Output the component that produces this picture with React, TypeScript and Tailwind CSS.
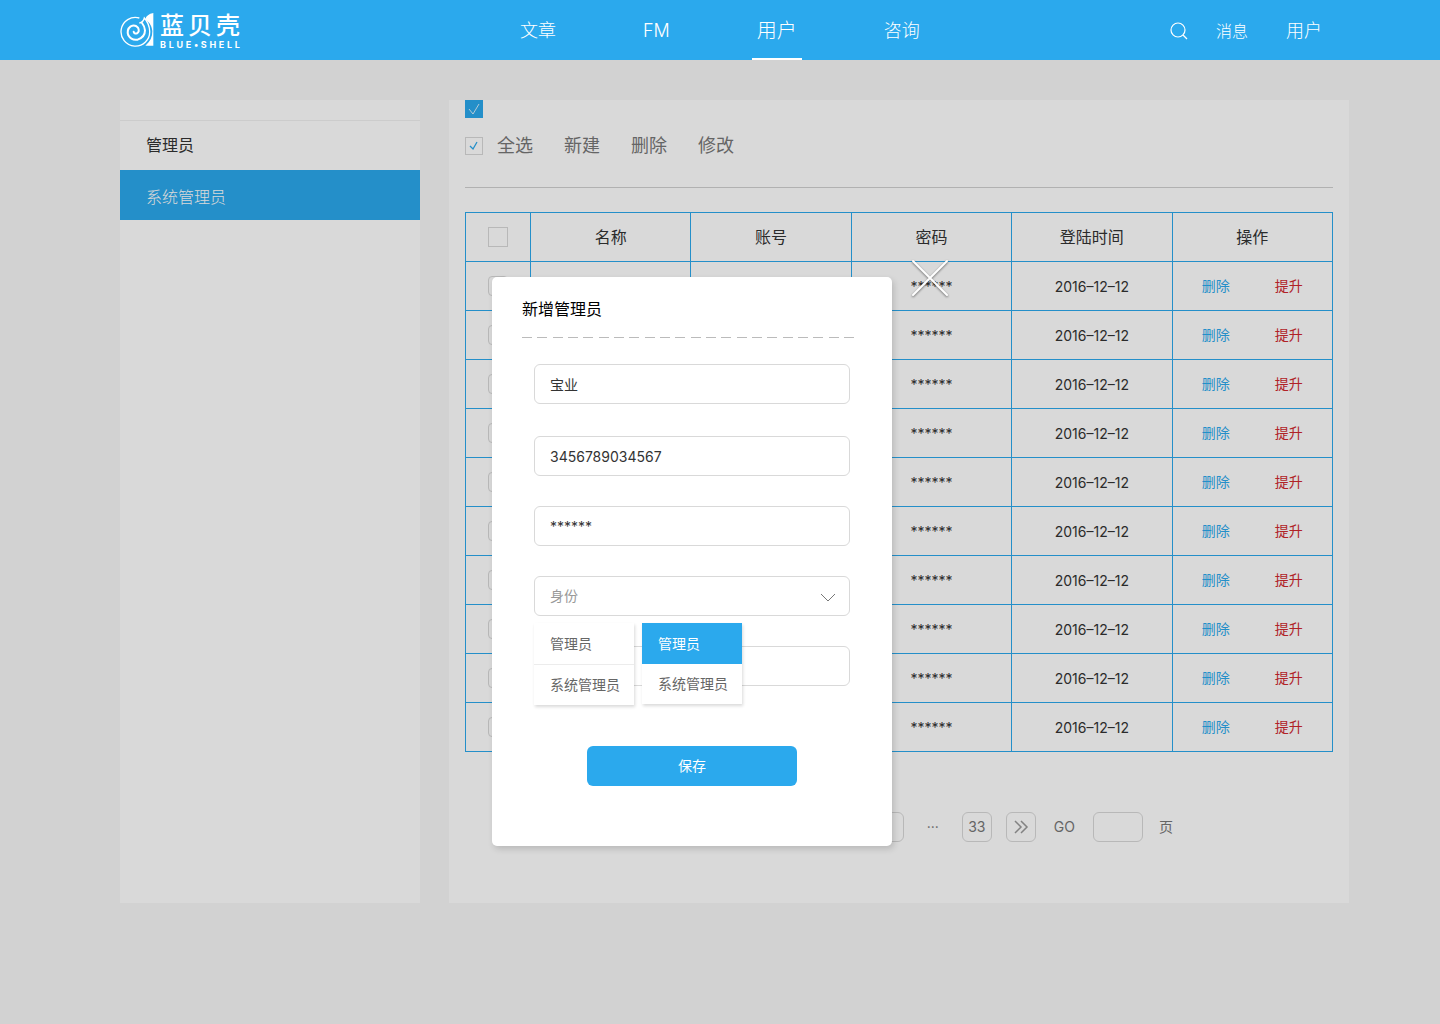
import type { ReactNode } from "react";

const navItems = [
  { label: "文章", active: false },
  { label: "FM", active: false },
  { label: "用户", active: true },
  { label: "咨询", active: false },
];

const rows = Array.from({ length: 10 }, (_, i) => ({ id: i, password: "******", date: "2016–12–12" }));

function Shell() {
  return (
    <svg viewBox="0 0 102 102" className="size-[34px] shrink-0" fill="none" aria-hidden="true">
      <path d="M76 18 Q80 4 100 0 V98 H76 Q98 80 97 54 Q95 36 84 26 Z" fill="#fff" />
      <path d="M58 15 A43 43 0 1 0 89 54 Q88 32 73 15 Q70 28 58 30" stroke="#fff" strokeWidth="4" />
      <path
        d="M41 56 Q43 64 51 61 Q60 55 54 44 Q45 34 32 40 Q19 50 25 67 Q34 83 53 80 Q75 73 75 52 Q74 40 66 30"
        stroke="#fff"
        strokeWidth="6"
        strokeLinecap="round"
      />
    </svg>
  );
}

function Logo() {
  return (
    <a href="#" aria-label="蓝贝壳 BLUE·SHELL" className="flex w-[120px] shrink-0 items-center gap-1.5 text-white">
      <Shell />
      <span className="flex flex-1 flex-col">
        <span className="flex justify-between text-2xl leading-7 font-medium">
          <span>蓝</span>
          <span>贝</span>
          <span>壳</span>
        </span>
        <span className="flex justify-between text-[9px] leading-[9px] font-bold">
          {["B", "L", "U", "E", "•", "S", "H", "E", "L", "L"].map((letter, i) => (
            <span key={i}>{letter}</span>
          ))}
        </span>
      </span>
    </a>
  );
}

function Header() {
  return (
    <header className="relative z-20 flex h-[60px] items-center bg-[#2ba9ed] pr-[118px] pl-[120px] font-light text-white">
      <Logo />
      <nav className="ml-[275px] flex h-full gap-[77px]">
        {navItems.map((item) => (
          <a
            key={item.label}
            href="#"
            className={
              item.active
                ? "flex items-center border-b-2 border-b-white px-[5px] pt-1 text-xl"
                : "flex items-center px-[5px] pt-0.5 text-lg"
            }
          >
            {item.label}
          </a>
        ))}
      </nav>
      <div className="ml-auto flex items-center pt-0.5">
        <button type="button" aria-label="搜索">
          <svg viewBox="0 0 18 18" className="size-[18px]" fill="none" stroke="#fff" strokeWidth="1.2">
            <circle cx="8" cy="8" r="7" />
            <path d="M13 13l4 4" />
          </svg>
        </button>
        <a href="#" className="ml-7 text-base">消息</a>
        <a href="#" className="ml-[38px] text-lg">用户</a>
      </div>
    </header>
  );
}

function Tick({ className, label }: { className: string; label: string }) {
  return (
    <span className="relative flex size-[18px]">
      <input
        type="checkbox"
        defaultChecked
        aria-label={label}
        className={`size-[18px] appearance-none border ${className}`}
      />
      <svg
        viewBox="0 0 18 18"
        className={`pointer-events-none absolute inset-0 ${label === "全选" ? "text-[#2ba9ed]" : "text-white"}`}
        fill="none"
        stroke="currentColor"
        strokeWidth={label === "全选" ? 1.3 : 0.8}
      >
        <path d={label === "全选" ? "M5 9l3 3 4-7" : "M4 9l4 5 6-10"} />
      </svg>
    </span>
  );
}

function Sidebar() {
  return (
    <aside className="w-[300px] shrink-0 bg-white pt-5 text-base">
      <a href="#" className="flex h-[50px] items-center border-t border-[#f0f0f0] pb-0.5 pl-[26px] text-[#333]">
        管理员
      </a>
      <a href="#" className="flex h-[50px] items-center bg-[#2ba9ed] pt-1 pl-[26px] font-light text-white">
        系统管理员
      </a>
    </aside>
  );
}

function Th({ children }: { children: ReactNode }) {
  return <th className="border border-[#2ba9ed] p-0 font-normal">{children}</th>;
}

function AdminTable() {
  return (
    <table className="mt-6 w-full table-fixed border-collapse text-center text-[#333]">
      <colgroup>
        <col className="w-[65px]" />
        <col span={5} />
      </colgroup>
      <thead>
        <tr className="h-[49px] text-base">
          <Th>
            <input type="checkbox" aria-label="选择全部" className="mx-auto block size-5 appearance-none border border-[#d9d9d9]" />
          </Th>
          <Th>名称</Th>
          <Th>账号</Th>
          <Th>密码</Th>
          <Th>登陆时间</Th>
          <Th>操作</Th>
        </tr>
      </thead>
      <tbody className="text-sm [&_td]:border [&_td]:border-[#2ba9ed] [&_td]:p-0">
        {rows.map((row) => (
          <tr key={row.id} className="h-[49px]">
            <td>
              <input type="checkbox" aria-label="选择" className="mx-auto block size-5 appearance-none rounded border border-[#d9d9d9]" />
            </td>
            <td />
            <td />
            <td>
              <span className="block pt-0.5">{row.password}</span>
            </td>
            <td>
              <span className="block pt-0.5">{row.date}</span>
            </td>
            <td>
              <div className="flex justify-center gap-[45px]">
                <button type="button" className="text-[#2ba9ed]">删除</button>
                <button type="button" className="text-[#d0282e]">提升</button>
              </div>
            </td>
          </tr>
        ))}
      </tbody>
    </table>
  );
}

function Pager() {
  return (
    <div className="mt-[60px] flex items-center justify-end pr-40 text-sm text-[#777]">
      <button type="button" aria-label="上一组" className="size-[30px] rounded-md border border-[#d9d9d9]" />
      <span className="w-[58px] text-center">···</span>
      <button type="button" className="size-[30px] rounded-md border border-[#d9d9d9]">33</button>
      <button type="button" aria-label="下一页" className="ml-3.5 flex size-[30px] items-center justify-center rounded-md border border-[#d9d9d9]">
        <svg viewBox="0 0 16 16" className="size-4" fill="none" stroke="#999" strokeWidth="1.5">
          <path d="M2 2l6 6-6 6M8 2l6 6-6 6" />
        </svg>
      </button>
      <label className="ml-[18px] flex items-center">
        GO
        <input type="text" className="mr-4 ml-[18px] h-[30px] w-[50px] rounded-md border border-[#d9d9d9] px-2" />
      </label>
      <span>页</span>
    </div>
  );
}

const fieldClass = "block h-10 w-full rounded-md border border-[#d9d9d9] bg-white px-[15px] text-sm text-[#333]";

function RoleMenus() {
  return (
    <div className="absolute top-full left-0 z-10 mt-[7px] flex items-start gap-2 text-sm text-[#666]">
      <div className="flex w-[100px] flex-col bg-white shadow-[1px_2px_3px_rgba(0,0,0,0.15)]">
        <button type="button" className="h-[42px] border-b border-[#ececec] pl-4 text-left">管理员</button>
        <button type="button" className="h-10 pl-4 text-left">系统管理员</button>
      </div>
      <div className="flex w-[100px] flex-col bg-white shadow-[1px_2px_3px_rgba(0,0,0,0.15)]">
        <button type="button" className="h-[41px] bg-[#2ba9ed] pl-4 text-left text-white">管理员</button>
        <button type="button" className="h-10 pl-4 text-left">系统管理员</button>
      </div>
    </div>
  );
}

function Modal() {
  return (
    <div className="absolute inset-x-0 top-[60px] bottom-0 z-10 flex items-start justify-center bg-black/15 pt-[217px] pr-14">
      <div role="dialog" aria-label="新增管理员" className="relative w-[400px] rounded-[5px] bg-white pt-5 pb-[60px] shadow-[2px_3px_6px_rgba(0,0,0,0.15)]">
        <button type="button" aria-label="关闭" className="absolute -top-[18px] left-full ml-[18px]">
          <svg viewBox="0 0 40 40" className="size-10 drop-shadow-[0_1px_1px_rgba(0,0,0,0.5)]" stroke="#fff" strokeWidth="2" strokeLinecap="round">
            <path d="M3 2L37 36M37 2L3 36" />
          </svg>
        </button>
        <h2 className="px-[30px] text-base leading-6 text-black">新增管理员</h2>
        <div className="mt-4 mr-[38px] ml-[30px] flex justify-between">
          {Array.from({ length: 22 }, (_, i) => (
            <span key={i} className="h-px w-2.5 bg-[#bbb]" />
          ))}
        </div>
        <form className="mt-[26px] px-[42px]">
          <input aria-label="名称" defaultValue="宝业" className={fieldClass} />
          <input aria-label="账号" defaultValue="3456789034567" className={`mt-8 ${fieldClass}`} />
          <input aria-label="密码" defaultValue="******" className={`mt-[30px] ${fieldClass}`} />
          <div className="relative mt-[30px]">
            <select
              aria-label="身份"
              className="block h-10 w-full appearance-none rounded-md border border-[#d9d9d9] bg-white px-[15px] text-sm text-[#999]"
            >
              <option>身份</option>
            </select>
            <svg viewBox="0 0 16 10" className="pointer-events-none absolute top-[17px] right-3.5 h-2.5 w-4" fill="none" stroke="#777">
              <path d="M1 1l7 7 7-7" />
            </svg>
            <RoleMenus />
          </div>
          <input aria-label="备注" className={`mt-[30px] ${fieldClass}`} />
          <button type="button" className="mx-auto mt-[60px] block h-10 w-[210px] rounded-md bg-[#2ba9ed] text-sm text-white">
            保存
          </button>
        </form>
      </div>
    </div>
  );
}

export default function App() {
  return (
    <div lang="zh-CN" className="relative min-h-screen bg-[#f7f7f7] font-['Inter','Noto_Sans_CJK_SC',sans-serif]">
      <Header />
      <main className="flex gap-[29px] pt-10 pr-[91px] pl-[120px]">
        <Sidebar />
        <section className="min-w-0 flex-1 bg-white px-4 pb-[61px]">
          <Tick label="已选" className="border-[#2ba9ed] bg-[#2ba9ed]" />
          <div className="mt-3.5 flex items-center border-b border-[#d0d0d0] pb-[27px] text-lg leading-7 text-[#777]">
            <Tick label="全选" className="border-[#d9d9d9] bg-white" />
            <button type="button" className="ml-3.5">全选</button>
            <button type="button" className="ml-[31px]">新建</button>
            <button type="button" className="ml-[31px]">删除</button>
            <button type="button" className="ml-[31px]">修改</button>
          </div>
          <AdminTable />
          <Pager />
        </section>
      </main>
      <Modal />
    </div>
  );
}
